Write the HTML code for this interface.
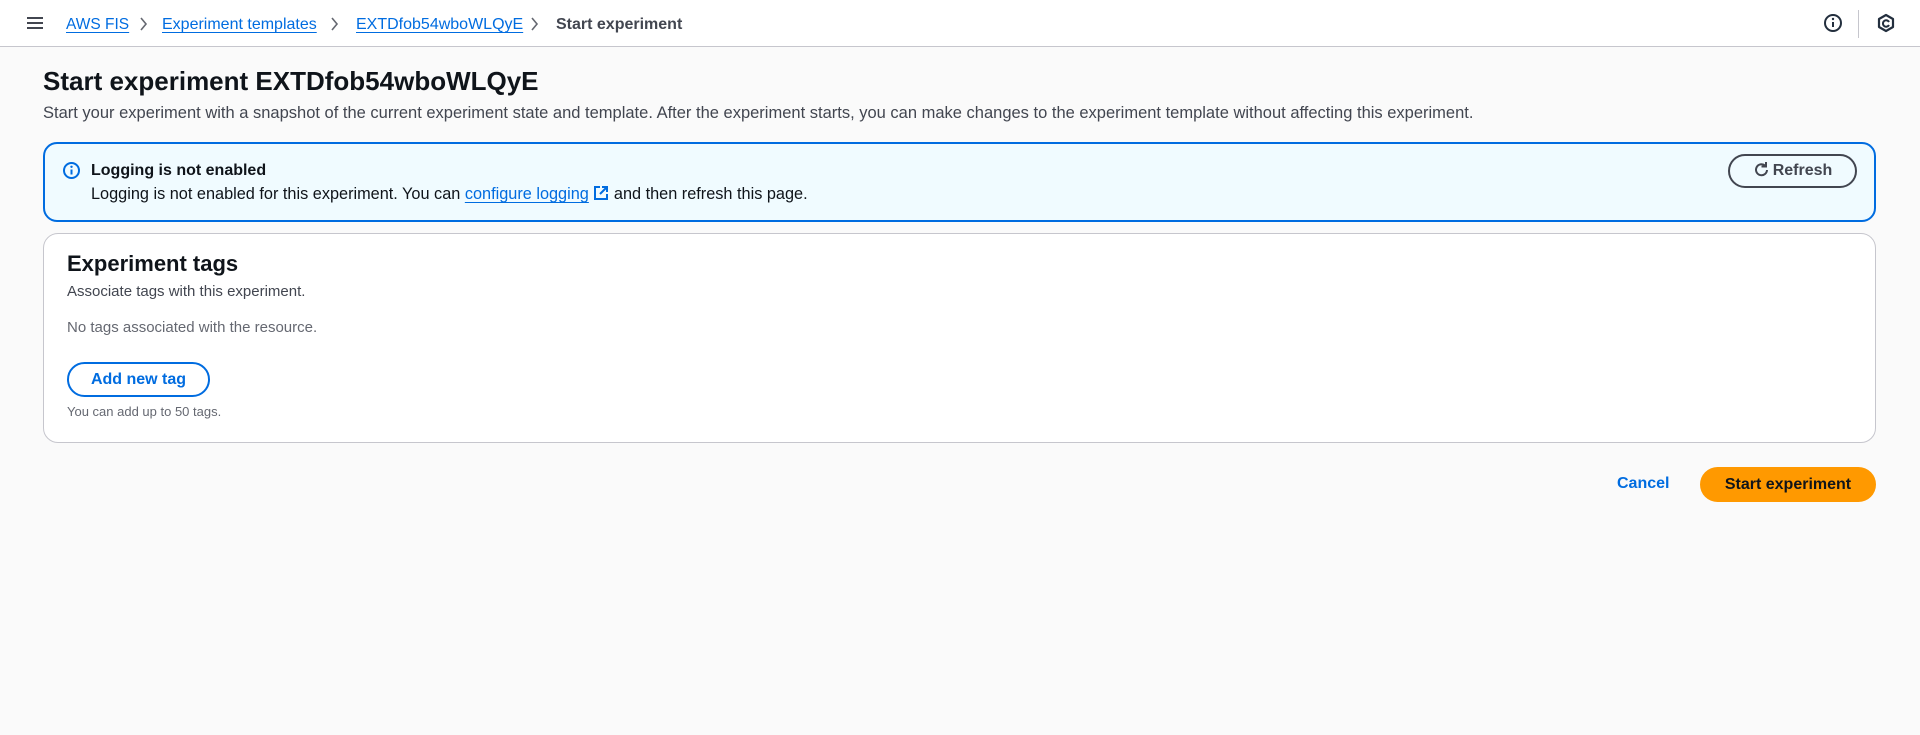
<!DOCTYPE html>
<html><head><meta charset="utf-8"><style>
*{box-sizing:border-box;margin:0;padding:0}
body{width:1920px;height:735px;background:#fafafa;font-family:"Liberation Sans",sans-serif;color:#0f141a;position:relative;overflow:hidden}
.hdr{position:absolute;left:0;top:0;width:1920px;height:47px;background:#fff;border-bottom:1px solid #c6c6cd}
.a{position:absolute;white-space:nowrap}
.lnk{color:#006ce0;text-decoration:underline;text-underline-offset:3px}
.bc{font-size:16px;top:16px}
</style></head><body>
<div class="hdr">
<svg class="a" style="left:26px;top:16px" width="18" height="14"><path d="M1 2h16M1 7h16M1 12h16" stroke="#424650" stroke-width="2"/></svg>
<span class="a bc lnk" style="left:66px;font-size:15.5px">AWS FIS</span>
<svg class="a" style="left:139px;top:16px" width="10" height="16"><path d="M2 2l5 6-5 6" stroke="#656871" stroke-width="1.6" fill="none"/></svg>
<span class="a bc lnk" style="left:162px">Experiment templates</span>
<svg class="a" style="left:330px;top:16px" width="10" height="16"><path d="M2 2l5 6-5 6" stroke="#656871" stroke-width="1.6" fill="none"/></svg>
<span class="a bc lnk" style="left:356px">EXTDfob54wboWLQyE</span>
<svg class="a" style="left:530px;top:16px" width="10" height="16"><path d="M2 2l5 6-5 6" stroke="#656871" stroke-width="1.6" fill="none"/></svg>
<span class="a bc" style="left:556px;color:#424650;font-weight:bold">Start experiment</span>
<svg class="a" style="left:1823px;top:13px" width="20" height="20"><circle cx="10" cy="10" r="8" stroke="#232f3e" stroke-width="2" fill="none"/><path d="M10 9v5" stroke="#232f3e" stroke-width="2"/><circle cx="10" cy="6" r="1.2" fill="#232f3e"/></svg>
<div class="a" style="left:1858px;top:10px;width:1px;height:28px;background:#c6c6cd"></div>
<svg class="a" style="left:1876px;top:13px" width="20" height="20"><path d="M10 2l7 4v8l-7 4-7-4V6z" stroke="#232f3e" stroke-width="2.2" fill="none" stroke-linejoin="round"/><path d="M13 9a3.2 3.2 0 1 0 0 3" stroke="#232f3e" stroke-width="2" fill="none"/></svg>
</div>
<div class="a" style="left:43px;top:66px;font-size:26px;font-weight:bold">Start experiment EXTDfob54wboWLQyE</div>
<div class="a" style="left:43px;top:104px;font-size:16.5px;color:#424650">Start your experiment with a snapshot of the current experiment state and template. After the experiment starts, you can make changes to the experiment template without affecting this experiment.</div>
<div class="a" style="left:43px;top:142px;width:1833px;height:80px;background:#f0fbff;border:2px solid #006ce0;border-radius:14px"></div>
<svg class="a" style="left:62px;top:161px" width="19" height="19"><circle cx="9.5" cy="9.5" r="7.5" stroke="#006ce0" stroke-width="2" fill="none"/><path d="M9.5 8.5v5" stroke="#006ce0" stroke-width="2"/><circle cx="9.5" cy="5.8" r="1.2" fill="#006ce0"/></svg>
<div class="a" style="left:91px;top:162px;font-size:16px;font-weight:bold">Logging is not enabled</div>
<div class="a" style="left:91px;top:185px;font-size:16.3px">Logging is not enabled for this experiment. You can <span class="lnk">configure logging</span> <svg width="16" height="16" style="vertical-align:-2px"><path d="M7 2H2v12h12V9" stroke="#006ce0" stroke-width="2" fill="none"/><path d="M9 2h5v5M14 2L7 9" stroke="#006ce0" stroke-width="2" fill="none"/></svg> and then refresh this page.</div>
<div class="a" style="left:1728px;top:154px;width:129px;height:34px;border:2px solid #424650;border-radius:17px;font-size:16px;font-weight:bold;color:#424650;text-align:center;line-height:30px"><svg width="17" height="17" style="vertical-align:-3px;margin-right:3px"><path d="M14 9a5.5 5.5 0 1 1-2-4.5" stroke="#424650" stroke-width="2" fill="none"/><path d="M13 1v4.5H8.5" stroke="#424650" stroke-width="2" fill="none"/></svg>Refresh</div>
<div class="a" style="left:43px;top:233px;width:1833px;height:210px;background:#fff;border:1px solid #c6c6cd;border-radius:15px"></div>
<div class="a" style="left:67px;top:251px;font-size:22px;font-weight:bold">Experiment tags</div>
<div class="a" style="left:67px;top:283px;font-size:15px;color:#424650">Associate tags with this experiment.</div>
<div class="a" style="left:67px;top:319px;font-size:15px;color:#656871">No tags associated with the resource.</div>
<div class="a" style="left:67px;top:362px;width:143px;height:35px;border:2px solid #006ce0;border-radius:18px;font-size:16px;font-weight:bold;color:#006ce0;text-align:center;line-height:31px">Add new tag</div>
<div class="a" style="left:67px;top:404px;font-size:13px;color:#656871">You can add up to 50 tags.</div>
<div class="a" style="left:1617px;top:475px;font-size:16px;font-weight:bold;color:#006ce0">Cancel</div>
<div class="a" style="left:1700px;top:467px;width:176px;height:35px;background:#ff9900;border-radius:18px;font-size:16px;font-weight:bold;color:#0f141a;text-align:center;line-height:35px">Start experiment</div>
</body></html>
